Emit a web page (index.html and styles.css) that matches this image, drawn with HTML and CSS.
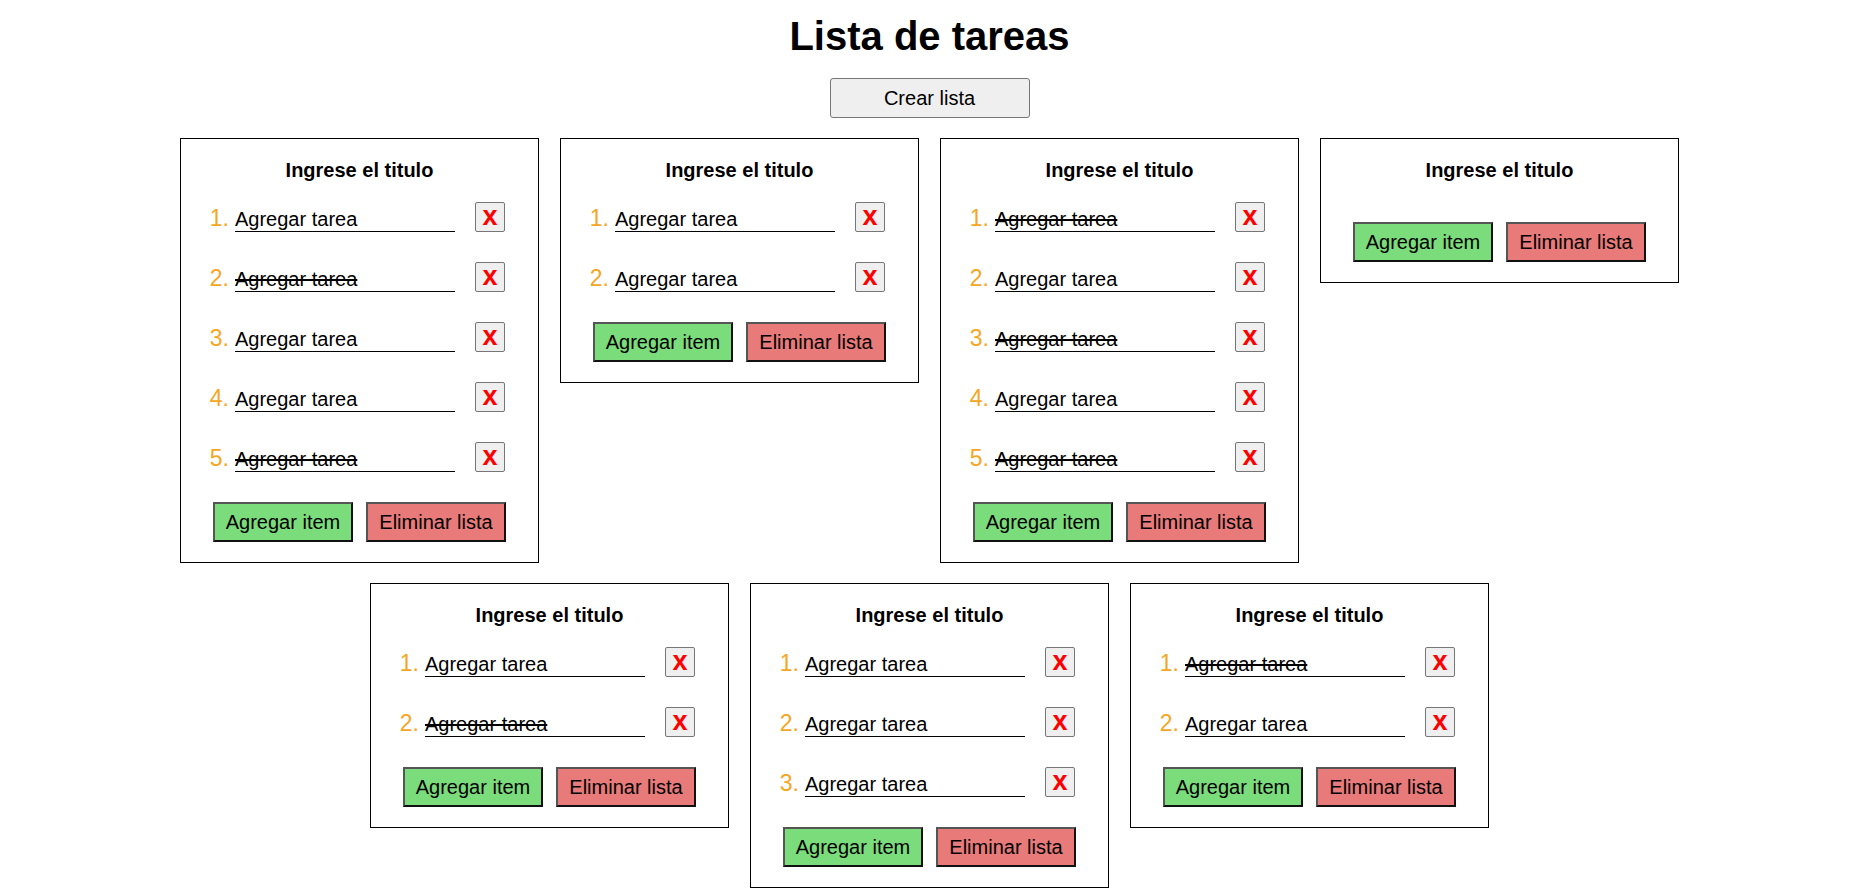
FILE: index.html
```html
<!DOCTYPE html>
<html lang="es">
<head>
<meta charset="utf-8">
<title>Lista de tareas</title>
<link rel="stylesheet" href="styles.css">
</head>
<body>
<div class="app">
  <h1 class="page-title">Lista de tareas</h1>
  <button class="create-btn">Crear lista</button>
  <div class="board">

    <div class="card">
      <div class="card-title">Ingrese el titulo</div>
      <ol class="tasks">
        <li class="task"><div class="field">Agregar tarea</div><button class="del">x</button></li>
        <li class="task"><div class="field done">Agregar tarea</div><button class="del">x</button></li>
        <li class="task"><div class="field">Agregar tarea</div><button class="del">x</button></li>
        <li class="task"><div class="field">Agregar tarea</div><button class="del">x</button></li>
        <li class="task"><div class="field done">Agregar tarea</div><button class="del">x</button></li>
      </ol>
      <div class="actions"><button class="add-btn">Agregar item</button><button class="remove-btn">Eliminar lista</button></div>
    </div>

    <div class="card">
      <div class="card-title">Ingrese el titulo</div>
      <ol class="tasks">
        <li class="task"><div class="field">Agregar tarea</div><button class="del">x</button></li>
        <li class="task"><div class="field">Agregar tarea</div><button class="del">x</button></li>
      </ol>
      <div class="actions"><button class="add-btn">Agregar item</button><button class="remove-btn">Eliminar lista</button></div>
    </div>

    <div class="card">
      <div class="card-title">Ingrese el titulo</div>
      <ol class="tasks">
        <li class="task"><div class="field done">Agregar tarea</div><button class="del">x</button></li>
        <li class="task"><div class="field">Agregar tarea</div><button class="del">x</button></li>
        <li class="task"><div class="field done">Agregar tarea</div><button class="del">x</button></li>
        <li class="task"><div class="field">Agregar tarea</div><button class="del">x</button></li>
        <li class="task"><div class="field done">Agregar tarea</div><button class="del">x</button></li>
      </ol>
      <div class="actions"><button class="add-btn">Agregar item</button><button class="remove-btn">Eliminar lista</button></div>
    </div>

    <div class="card">
      <div class="card-title">Ingrese el titulo</div>
      <ol class="tasks"></ol>
      <div class="actions"><button class="add-btn">Agregar item</button><button class="remove-btn">Eliminar lista</button></div>
    </div>

    <div class="card">
      <div class="card-title">Ingrese el titulo</div>
      <ol class="tasks">
        <li class="task"><div class="field">Agregar tarea</div><button class="del">x</button></li>
        <li class="task"><div class="field done">Agregar tarea</div><button class="del">x</button></li>
      </ol>
      <div class="actions"><button class="add-btn">Agregar item</button><button class="remove-btn">Eliminar lista</button></div>
    </div>

    <div class="card">
      <div class="card-title">Ingrese el titulo</div>
      <ol class="tasks">
        <li class="task"><div class="field">Agregar tarea</div><button class="del">x</button></li>
        <li class="task"><div class="field">Agregar tarea</div><button class="del">x</button></li>
        <li class="task"><div class="field">Agregar tarea</div><button class="del">x</button></li>
      </ol>
      <div class="actions"><button class="add-btn">Agregar item</button><button class="remove-btn">Eliminar lista</button></div>
    </div>

    <div class="card">
      <div class="card-title">Ingrese el titulo</div>
      <ol class="tasks">
        <li class="task"><div class="field done">Agregar tarea</div><button class="del">x</button></li>
        <li class="task"><div class="field">Agregar tarea</div><button class="del">x</button></li>
      </ol>
      <div class="actions"><button class="add-btn">Agregar item</button><button class="remove-btn">Eliminar lista</button></div>
    </div>

  </div>
</div>
</body>
</html>
```

FILE: styles.css
```css
html, body {
  margin: 0;
  padding: 0;
  background: #ffffff;
}

body {
  font-family: "Liberation Sans", Arial, sans-serif;
  font-size: 20px;
  color: #000;
}

.app {
  width: 1859px;
  display: flex;
  flex-direction: column;
  align-items: center;
}

.page-title {
  font-size: 40px;
  font-weight: bold;
  line-height: 46px;
  margin: 13px 0 19px 0;
}

.create-btn {
  width: 200px;
  height: 40px;
  font-family: "Liberation Sans", Arial, sans-serif;
  font-size: 20px;
  color: #000;
  background: #efefef;
  border: 1px solid #767676;
  border-radius: 3px;
  padding: 0;
  margin: 0 0 20px 0;
}

.board {
  display: flex;
  flex-wrap: wrap;
  justify-content: center;
  align-items: flex-start;
  column-gap: 21px;
  row-gap: 20px;
  width: 100%;
}

.card {
  box-sizing: border-box;
  width: 359px;
  border: 1px solid #000;
  padding: 20px;
  display: flex;
  flex-direction: column;
  gap: 20px;
}

.card-title {
  font-weight: bold;
  font-size: 20px;
  line-height: 23px;
  text-align: center;
}

.tasks {
  list-style: none;
  margin: 0;
  padding: 0;
  display: flex;
  flex-direction: column;
  gap: 20px;
  counter-reset: task;
}

.task {
  counter-increment: task;
  height: 40px;
  display: flex;
  align-items: flex-start;
}

.task::before {
  content: counter(task) ".";
  color: #f5a623;
  font-size: 23px;
  width: 28px;
  margin-top: 5px;
  margin-right: 6px;
  line-height: 23px;
  text-align: right;
}

.field {
  box-sizing: border-box;
  width: 220px;
  height: 24px;
  margin-top: 6px;
  line-height: 23px;
  border-bottom: 1px solid #000;
  white-space: nowrap;
}

.field.done {
  text-decoration: line-through;
}

.del {
  box-sizing: border-box;
  width: 30px;
  height: 30px;
  margin-left: 20px;
  padding: 0 0 3px 0;
  background: #efefef;
  border: 1px solid #767676;
  border-radius: 2px;
  color: #ff0000;
  font-family: "Liberation Sans", Arial, sans-serif;
  font-weight: bold;
  font-size: 27px;
  line-height: 24px;
}

.actions {
  display: flex;
  justify-content: center;
  gap: 13px;
}

.add-btn,
.remove-btn {
  box-sizing: border-box;
  width: 140px;
  height: 40px;
  padding: 0;
  font-family: "Liberation Sans", Arial, sans-serif;
  font-size: 20px;
  color: #000;
  border-style: solid;
  border-width: 2px;
  border-color: #555 #111 #111 #555;
}

.add-btn {
  background: #7bdc7b;
}

.remove-btn {
  background: #e87a7a;
}
```
